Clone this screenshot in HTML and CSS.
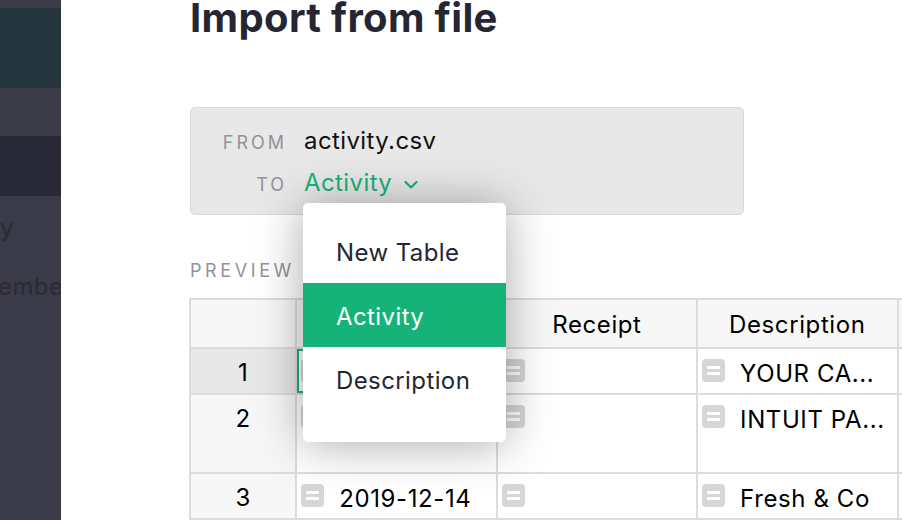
FILE: index.html
```html
<!DOCTYPE html>
<html lang="en">
<head>
<meta charset="utf-8">
<title>Import from file</title>
<link rel="stylesheet" href="styles.css">
</head>
<body>
<div class="app">
  <aside class="sidebar">
    <div class="sb-top"></div>
    <div class="sb-brand"></div>
    <div class="sb-tools"></div>
    <div class="sb-active"></div>
    <div class="sb-list">
      <div class="sb-item sb-item-a">Activity</div>
      <div class="sb-item sb-item-b">December</div>
    </div>
  </aside>
  <main class="main">
    <h1 class="title">Import from file</h1>
    <div class="source-box">
      <div class="src-row">
        <span class="src-label">FROM</span>
        <span class="src-value">activity.csv</span>
      </div>
      <div class="src-row">
        <span class="src-label">TO</span>
        <span class="src-select">
          <span class="select-text">Activity</span>
          <svg class="chev" width="16" height="10" viewBox="0 0 16 10"><path d="M2.5 2 L8 7.5 L13.5 2" fill="none" stroke="#16b378" stroke-width="2.2" stroke-linecap="round" stroke-linejoin="round"/></svg>
          <div class="menu">
            <div class="menu-item">New Table</div>
            <div class="menu-item selected">Activity</div>
            <div class="menu-item">Description</div>
          </div>
        </span>
      </div>
    </div>
    <div class="preview-label">PREVIEW</div>
    <table class="grid">
      <colgroup>
        <col class="c-num"><col class="c-data"><col class="c-data"><col class="c-data"><col class="c-data">
      </colgroup>
      <thead>
        <tr class="r-head">
          <th class="num"></th>
          <th>Date</th>
          <th>Receipt</th>
          <th>Description</th>
          <th>Amount</th>
        </tr>
      </thead>
      <tbody>
        <tr class="r-1">
          <td class="num sel">1</td>
          <td class="cursor"><div class="cell"><svg class="ficon" viewBox="0 0 23 23"><rect width="23" height="23" rx="4" fill="#d6d6d6"/><rect x="5" y="7" width="13" height="3" rx="1" fill="#fff"/><rect x="5" y="13" width="13" height="3" rx="1" fill="#fff"/></svg><span>2019-12-31</span></div></td>
          <td><div class="cell"><svg class="ficon" viewBox="0 0 23 23"><rect width="23" height="23" rx="4" fill="#d6d6d6"/><rect x="5" y="7" width="13" height="3" rx="1" fill="#fff"/><rect x="5" y="13" width="13" height="3" rx="1" fill="#fff"/></svg></div></td>
          <td><div class="cell"><svg class="ficon" viewBox="0 0 23 23"><rect width="23" height="23" rx="4" fill="#d6d6d6"/><rect x="5" y="7" width="13" height="3" rx="1" fill="#fff"/><rect x="5" y="13" width="13" height="3" rx="1" fill="#fff"/></svg><span>YOUR CA...</span></div></td>
          <td><div class="cell"><svg class="ficon" viewBox="0 0 23 23"><rect width="23" height="23" rx="4" fill="#d6d6d6"/><rect x="5" y="7" width="13" height="3" rx="1" fill="#fff"/><rect x="5" y="13" width="13" height="3" rx="1" fill="#fff"/></svg></div></td>
        </tr>
        <tr class="r-2">
          <td class="num">2</td>
          <td><div class="cell"><svg class="ficon" viewBox="0 0 23 23"><rect width="23" height="23" rx="4" fill="#d6d6d6"/><rect x="5" y="7" width="13" height="3" rx="1" fill="#fff"/><rect x="5" y="13" width="13" height="3" rx="1" fill="#fff"/></svg><span>2019-12-16</span></div></td>
          <td><div class="cell"><svg class="ficon" viewBox="0 0 23 23"><rect width="23" height="23" rx="4" fill="#d6d6d6"/><rect x="5" y="7" width="13" height="3" rx="1" fill="#fff"/><rect x="5" y="13" width="13" height="3" rx="1" fill="#fff"/></svg></div></td>
          <td><div class="cell"><svg class="ficon" viewBox="0 0 23 23"><rect width="23" height="23" rx="4" fill="#d6d6d6"/><rect x="5" y="7" width="13" height="3" rx="1" fill="#fff"/><rect x="5" y="13" width="13" height="3" rx="1" fill="#fff"/></svg><span>INTUIT PA...</span></div></td>
          <td><div class="cell"><svg class="ficon" viewBox="0 0 23 23"><rect width="23" height="23" rx="4" fill="#d6d6d6"/><rect x="5" y="7" width="13" height="3" rx="1" fill="#fff"/><rect x="5" y="13" width="13" height="3" rx="1" fill="#fff"/></svg></div></td>
        </tr>
        <tr class="r-3">
          <td class="num">3</td>
          <td><div class="cell"><svg class="ficon" viewBox="0 0 23 23"><rect width="23" height="23" rx="4" fill="#d6d6d6"/><rect x="5" y="7" width="13" height="3" rx="1" fill="#fff"/><rect x="5" y="13" width="13" height="3" rx="1" fill="#fff"/></svg><span>2019-12-14</span></div></td>
          <td><div class="cell"><svg class="ficon" viewBox="0 0 23 23"><rect width="23" height="23" rx="4" fill="#d6d6d6"/><rect x="5" y="7" width="13" height="3" rx="1" fill="#fff"/><rect x="5" y="13" width="13" height="3" rx="1" fill="#fff"/></svg></div></td>
          <td><div class="cell"><svg class="ficon" viewBox="0 0 23 23"><rect width="23" height="23" rx="4" fill="#d6d6d6"/><rect x="5" y="7" width="13" height="3" rx="1" fill="#fff"/><rect x="5" y="13" width="13" height="3" rx="1" fill="#fff"/></svg><span>Fresh &amp; Co</span></div></td>
          <td><div class="cell"><svg class="ficon" viewBox="0 0 23 23"><rect width="23" height="23" rx="4" fill="#d6d6d6"/><rect x="5" y="7" width="13" height="3" rx="1" fill="#fff"/><rect x="5" y="13" width="13" height="3" rx="1" fill="#fff"/></svg></div></td>
        </tr>
      </tbody>
    </table>
  </main>
</div>
</body>
</html>
```

FILE: styles.css
```css
html, body {
  margin: 0;
  padding: 0;
  width: 902px;
  height: 520px;
  overflow: hidden;
  background: #fff;
  font-family: Inter, "Noto Sans", sans-serif;
}

.app {
  display: flex;
  width: 902px;
  height: 520px;
  overflow: hidden;
}

/* sidebar (dimmed behind overlay) */
.sidebar {
  width: 61px;
  flex: 0 0 61px;
  display: flex;
  flex-direction: column;
  background: #3a3a47;
  overflow: hidden;
}
.sb-top { height: 8px; background: #3b3b48; }
.sb-brand { height: 80px; background: #26363e; }
.sb-tools { height: 48px; background: #3b3a47; }
.sb-active { height: 60px; background: #282836; }
.sb-list {
  flex: 1;
  background: #3a3a48;
  padding-top: 17px;
  white-space: nowrap;
}
.sb-item {
  font-size: 24px;
  line-height: 30px;
  height: 58px;
  color: #2a2a36;
  letter-spacing: 0.35px;
}
.sb-item-a { text-indent: -74px; }
.sb-item-b { text-indent: -48px; height: 30px; margin-top: 1px; }

/* main */
.main {
  flex: 1;
  padding-left: 129px;
  position: relative;
  color: #262633;
}

.title {
  margin: -2px 0 0 0;
  font-size: 40px;
  line-height: 40px;
  font-weight: 700;
  color: #262633;
  letter-spacing: 0.35px;
}

.source-box {
  margin-top: 69px;
  width: 552px;
  height: 106px;
  box-sizing: content-box;
  background: #e8e8e8;
  border: 1px solid #d9d9d9;
  border-radius: 5px;
  padding: 0;
}
.src-row {
  display: flex;
  align-items: baseline;
  height: 42px;
  line-height: 42px;
}
.src-row:first-child { margin-top: 12px; }
.src-label {
  width: 96px;
  text-align: right;
  font-size: 18px;
  letter-spacing: 3px;
  color: #929299;
  margin-right: 17px;
}
.src-value {
  font-size: 24px;
  letter-spacing: 0.4px;
  color: #111;
}
.src-select {
  position: relative;
  display: flex;
  align-items: center;
  font-size: 24px;
  letter-spacing: 0.4px;
  color: #16b378;
}
.chev { margin-left: 11px; margin-top: 3px; }

.menu {
  position: absolute;
  left: -1px;
  top: 41px;
  width: 203px;
  height: 239px;
  box-sizing: border-box;
  padding-top: 16px;
  background: #fff;
  border-radius: 5px;
  box-shadow: 0 2px 48px rgba(0, 0, 0, 0.34);
  z-index: 10;
}
.menu-item {
  height: 64px;
  box-sizing: border-box;
  padding-top: 3px;
  line-height: 61px;
  padding-left: 33px;
  font-size: 24px;
  letter-spacing: 0.4px;
  color: #262633;
}
.menu-item.selected {
  background: #16b378;
  color: #fff;
}

.preview-label {
  margin-top: 44px;
  font-size: 18px;
  line-height: 24px;
  letter-spacing: 3.6px;
  color: #929299;
}

/* grid */
.grid {
  margin-top: 15px;
  margin-left: -1px;
  border-collapse: separate;
  border-spacing: 0;
  table-layout: fixed;
  width: 910px;
  border-top: 2px solid #dcdcdc;
  border-left: 2px solid #dcdcdc;
  font-size: 24px;
  letter-spacing: 0.6px;
  color: #000;
}
.c-num { width: 106px; }
.c-data { width: 200px; }
.grid th, .grid td {
  border-right: 2px solid #dcdcdc;
  border-bottom: 2px solid #dcdcdc;
  padding: 0;
  vertical-align: top;
  overflow: hidden;
  white-space: nowrap;
  box-sizing: border-box;
}
.grid th {
  height: 49px;
  padding-top: 10px;
  line-height: 30px;
  font-weight: 400;
  text-align: center;
  background: #f7f7f7;
  color: #000;
}
.grid td {
  background: #fff;
}
.grid td.num {
  background: #f7f7f7;
  text-align: center;
  padding-top: 9px;
  line-height: 30px;
}
.grid td.num.sel { background: #e8e8e8; }
.r-1 td { height: 46px; }
.r-2 td { height: 79px; }
.r-3 td { height: 46px; }

.cell {
  display: flex;
  align-items: flex-start;
  padding: 10px 0 0 4px;
  line-height: 30px;
}
.ficon {
  width: 23px;
  height: 23px;
  flex: 0 0 23px;
  margin-top: 0;
  margin-right: 15px;
}
.grid td.cursor {
  box-shadow: inset 0 0 0 2px #16b378;
}
```
